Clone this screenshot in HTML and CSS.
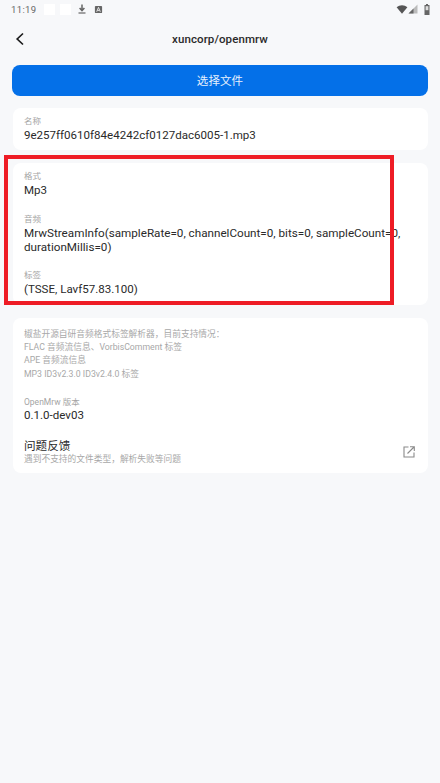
FILE: index.html
```html
<!DOCTYPE html>
<html lang="zh">
<head>
<meta charset="utf-8">
<title>xuncorp/openmrw</title>
<link rel="stylesheet" href="styles.css">
</head>
<body>
<div class="screen">
  <div class="status">
    <span class="time">11:19</span>
    <span class="blank"></span>
    <span class="blank"></span>
    <svg class="si-dl" viewBox="0 0 10 10"><path d="M5 0.5V6M2.6 4L5 6.6 7.4 4" fill="none" stroke="#666" stroke-width="1.5"/><path d="M1.5 9H8.5" stroke="#666" stroke-width="1.2"/></svg>
    <svg class="si-a" viewBox="0 0 10 10"><rect x="1" y="1" width="8" height="8" rx="1" fill="#666"/><path d="M3 7.5L5 2.6 7 7.5M3.8 6H6.2" fill="none" stroke="#eee" stroke-width="1"/></svg>
    <span class="status-right">
      <svg class="si-wifi" viewBox="0 0 12 10"><path d="M0 2.6C3.4-.5 8.6-.5 12 2.6L6 9.6Z" fill="#555"/></svg>
      <svg class="si-signal" viewBox="0 0 10 10"><path d="M9.5 .5V9.5H.5Z" fill="#bbb"/><path d="M5.5 4.5V9.5H.5Z" fill="#666"/></svg>
      <svg class="si-batt" viewBox="0 0 6 11"><path d="M2 0H4V1H5.5V11H.5V1H2Z" fill="#666"/><rect x="1.6" y="2.2" width="2.8" height="4" fill="#ddd"/></svg>
    </span>
  </div>
  <header class="topbar">
    <svg class="back" viewBox="0 0 10 14"><path d="M8 1.5L2.2 7 8 12.5" fill="none" stroke="#1c1c1c" stroke-width="1.7"/></svg>
    <h1 class="title">xuncorp/openmrw</h1>
  </header>
  <main class="content">
    <button class="pick">选择文件</button>
    <section class="card card-name">
      <div class="label">名称</div>
      <div class="value">9e257ff0610f84e4242cf0127dac6005-1.mp3</div>
    </section>
    <section class="card card-info">
      <div class="field">
        <div class="label">格式</div>
        <div class="value">Mp3</div>
      </div>
      <div class="field">
        <div class="label">音频</div>
        <div class="value value-long">MrwStreamInfo(sampleRate=0, channelCount=0, bits=0, sampleCount=0, durationMillis=0)</div>
      </div>
      <div class="field">
        <div class="label">标签</div>
        <div class="value">(TSSE, Lavf57.83.100)</div>
      </div>
    </section>
    <section class="card card-about">
      <div class="desc">
        <div>椒盐开源自研音频格式标签解析器，目前支持情况：</div>
        <div>FLAC 音频流信息、VorbisComment 标签</div>
        <div>APE 音频流信息</div>
        <div>MP3 ID3v2.3.0 ID3v2.4.0 标签</div>
      </div>
      <div class="version">
        <div class="label">OpenMrw 版本</div>
        <div class="value">0.1.0-dev03</div>
      </div>
      <div class="feedback">
        <div class="feedback-text">
          <div class="feedback-title">问题反馈</div>
          <div class="feedback-sub">遇到不支持的文件类型，解析失败等问题</div>
        </div>
        <svg class="open" viewBox="0 0 12 12"><path d="M5.5 1H1V11H11V6.5" fill="none" stroke="#8a8a8a" stroke-width="1.1"/><path d="M4.5 7.5L11 1M7 .7H11.3V5" fill="none" stroke="#8a8a8a" stroke-width="1.1"/></svg>
      </div>
    </section>
  </main>
  <div class="annotation"></div>
</div>
</body>
</html>
```
FILE: styles.css
```css
* { box-sizing: border-box; }
html, body { margin: 0; padding: 0; }
body {
  width: 440px;
  height: 783px;
  overflow: hidden;
  background: #f7f8fa;
  font-family: Roboto, "Noto Sans CJK SC", sans-serif;
}
.screen { position: relative; width: 440px; height: 783px; }
.status {
  display: flex;
  align-items: center;
  height: 18px;
  padding: 0 10px 0 11px;
}
.time { font-size: 9.5px; letter-spacing: .35px; color: #666; width: 33px; }
.blank { width: 11px; height: 11px; background: #fff; margin-right: 5px; }
.blank + .blank { margin-right: 6px; }
.si-dl { width: 10px; height: 10px; margin-right: 7px; }
.si-a { width: 9px; height: 9px; }
.status-right { margin-left: auto; display: flex; align-items: center; gap: 0; }
.si-wifi { width: 12px; height: 9px; }
.si-signal { width: 10px; height: 10px; }
.si-batt { width: 6px; height: 11px; margin-left: 6px; }
.topbar {
  position: relative;
  height: 41px;
  display: flex;
  align-items: center;
  justify-content: center;
}
.back { position: absolute; left: 15px; top: 14px; width: 10px; height: 14px; }
.title { margin: 0; font-size: 11.5px; font-weight: 500; color: #2a2a2a; letter-spacing: .1px; }
.content { padding: 6px 12px 0; display: flex; flex-direction: column; }
.pick {
  height: 31px;
  border: 0;
  border-radius: 8px;
  padding: 0 0 2px;
  background: #0470e8;
  color: #e8f1fd;
  font-family: inherit;
  font-size: 11.5px;
  letter-spacing: .1px;
  margin-bottom: 12px;
}
.card {
  background: #fff;
  border-radius: 8px;
  margin: 0 0 13px 1px;
  padding: 8px 12px 0 11px;
}
.card-name { height: 42px; }
.card-info { height: 142px; }
.card-about { height: 155px; padding-top: 10px; }
.label { font-size: 8.5px; line-height: 11px; color: #a5a5a5; }
.value { font-size: 11.55px; line-height: 14px; margin-top: 1px; color: #2a2a2a; }
.value-long { font-size: 11.68px; }
.field { margin-bottom: 16.5px; }
.desc { font-size: 8.72px; line-height: 13.2px; color: #a8a8a8; }
.version { margin-top: 16.5px; }
.version .value { margin-top: 0; }
.feedback { display: flex; align-items: center; justify-content: space-between; margin-top: 17px; }
.feedback-title { font-size: 11.6px; line-height: 15px; color: #2a2a2a; }
.feedback-sub { font-size: 8.72px; line-height: 11px; color: #a8a8a8; }
.open { width: 12px; height: 12px; margin-right: 1px; }
.annotation {
  position: absolute;
  left: 4px;
  top: 155px;
  width: 390px;
  height: 150px;
  border: 4px solid #ee1c25;
}
```
